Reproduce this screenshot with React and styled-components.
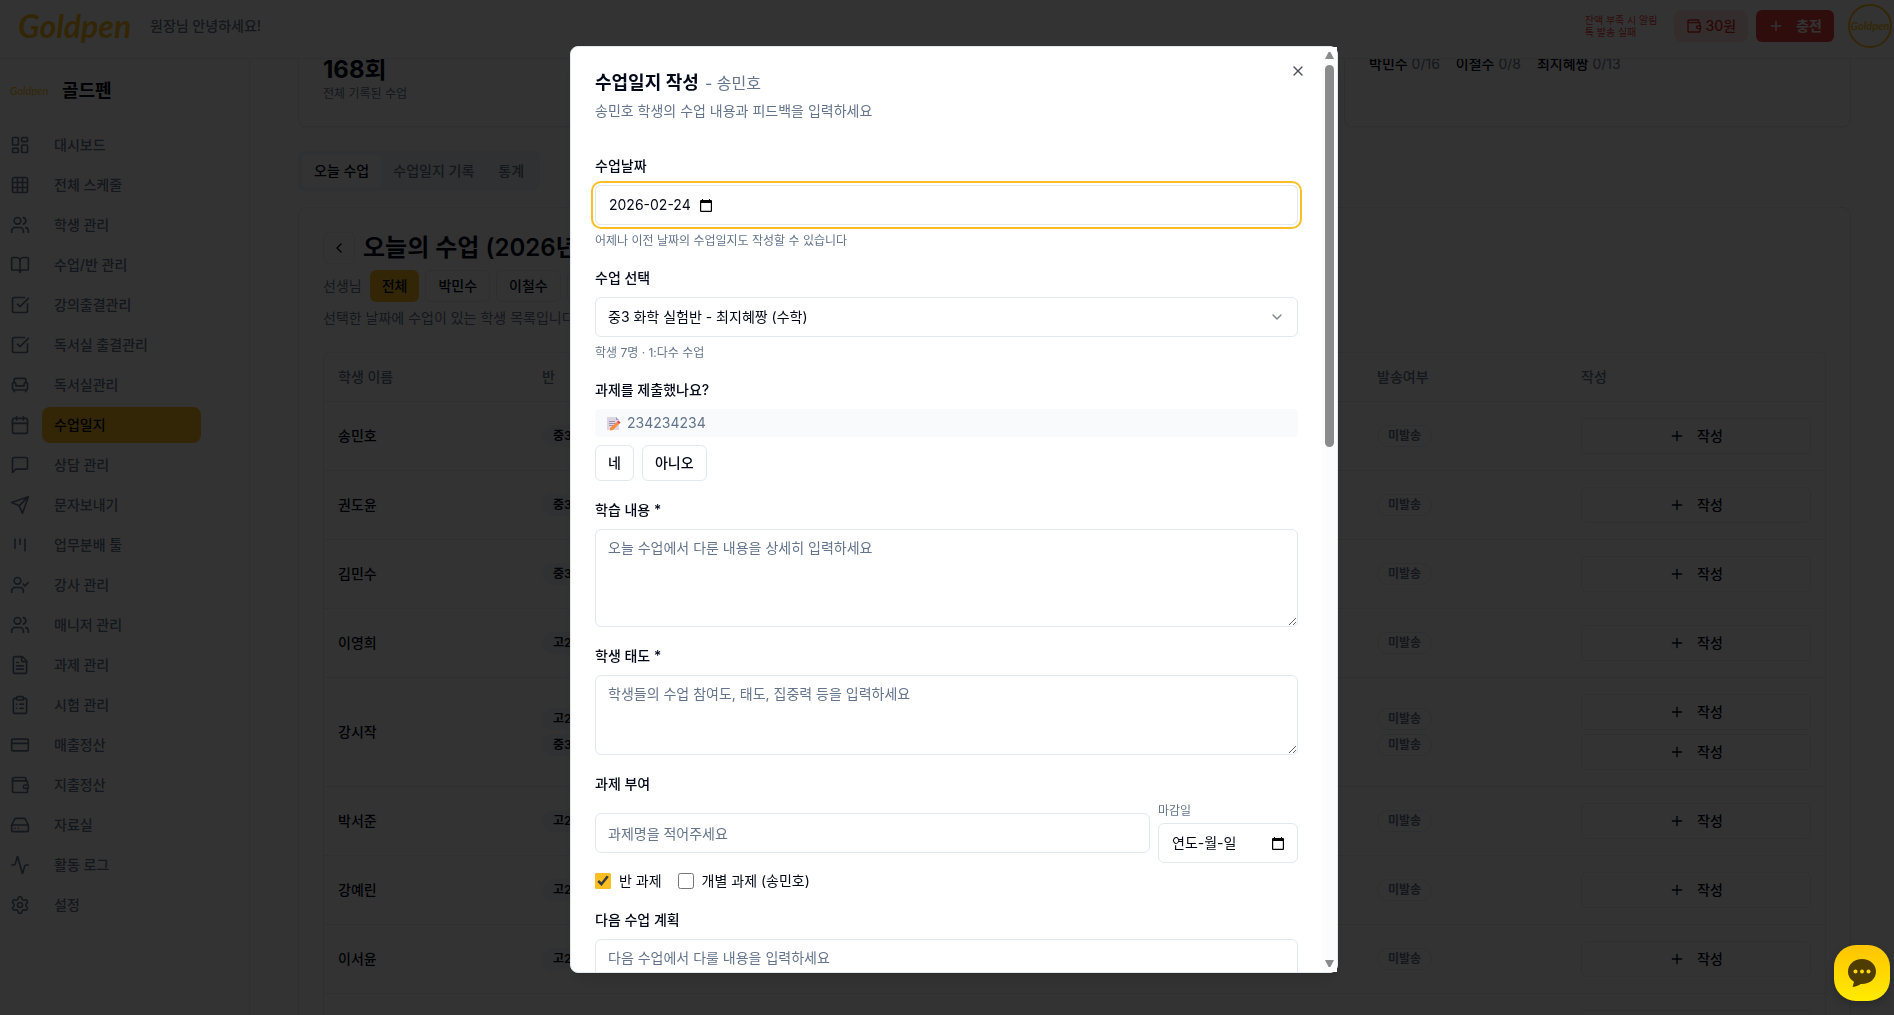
import React, { useState } from 'react'
import styled, { createGlobalStyle } from 'styled-components'
import {
    Activity, Armchair, BookOpen, Calendar, ChevronDown, ChevronLeft, ClipboardList, CreditCard,
    FileText, Grid3x3, HardDrive, LayoutDashboard, Plus, Settings, SquareCheckBig, UserCheck,
    Users, Wallet, X,
} from 'lucide-react'

const line = {
    viewBox: '0 0 24 24', fill: 'none', stroke: 'currentColor',
    strokeWidth: 2, strokeLinecap: 'round', strokeLinejoin: 'round',
}

const ChatIcon = ({ size }) => (
    <svg {...line} width={size} height={size}>
        <path d="M21 15a2 2 0 0 1-2 2H7l-4 4V5a2 2 0 0 1 2-2h14a2 2 0 0 1 2 2z" />
    </svg>
)

const SendIcon = ({ size }) => (
    <svg {...line} width={size} height={size}>
        <path d="m22 2-7 20-4-9-9-4Z" />
        <path d="M22 2 11 13" />
    </svg>
)

const KanbanIcon = ({ size }) => (
    <svg {...line} width={size} height={size}>
        <path d="M6 5v11" />
        <path d="M12 5v6" />
        <path d="M18 5v14" />
    </svg>
)

const DateIcon = () => (
    <svg width="12" height="13" viewBox="0 0 12 13">
        <path fill="#000" fillRule="evenodd" d="M1 1h1V0h1v1h6V0h1v1h1a1 1 0 0 1 1 1v10a1 1 0 0 1-1 1H1a1 1 0 0 1-1-1V2a1 1 0 0 1 1-1zM1.200 4v7.800h9.600V4z" />
    </svg>
)

const MemoIcon = () => (
    <svg width="14" height="15" viewBox="0 0 14 15">
        <path fill="#dcd5e4" d="M0 1h9l3 3v10H0z" />
        <path fill="#a79bb5" d="M9 1l3 3H9z" />
        <path stroke="#9c93a8" d="M2 5.500h6M2 7.500h7M2 9.500h5" />
        <path fill="#ff8b3d" d="M3 12l7-6 2 2-6 6-3 .5z" />
        <path fill="#e8433f" d="M10 6l1.500-1.500 2 2L12 8z" />
    </svg>
)

const BubbleIcon = () => (
    <svg width="28" height="28" viewBox="0 0 28 28">
        <path fill="#4f3d00" d="M14 0C6 0 0 5.500 0 12.500c0 4.500 2.300 8 6 10.200L4.600 28c4-.5 6.400-1.800 8-3 9 .5 15.400-5 15.400-12.500C28 5.500 22 0 14 0z" />
        <circle cx="7.500" cy="12.500" r="2" fill="#ffd800" />
        <circle cx="14" cy="12.500" r="2" fill="#ffd800" />
        <circle cx="20.500" cy="12.500" r="2" fill="#ffd800" />
    </svg>
)

const MENU = [
    ['대시보드', LayoutDashboard],
    ['전체 스케줄', Grid3x3],
    ['학생 관리', Users],
    ['수업/반 관리', BookOpen],
    ['강의출결관리', SquareCheckBig],
    ['독서실 출결관리', SquareCheckBig],
    ['독서실관리', Armchair],
    ['수업일지', Calendar],
    ['상담 관리', ChatIcon],
    ['문자보내기', SendIcon],
    ['업무분배 툴', KanbanIcon],
    ['강사 관리', UserCheck],
    ['매니저 관리', Users],
    ['과제 관리', FileText],
    ['시험 관리', ClipboardList],
    ['매출정산', CreditCard],
    ['지출정산', Wallet],
    ['자료실', HardDrive],
    ['활동 로그', Activity],
    ['설정', Settings],
]

const STUDENTS = [
    ['송민호', ['중3']],
    ['권도윤', ['중3']],
    ['김민수', ['중3']],
    ['이영희', ['고2']],
    ['강시작', ['고2', '중3']],
    ['박서준', ['고2']],
    ['강예린', ['고2']],
    ['이서윤', ['고2']],
    ['최하준', ['고2']],
]

const TEACHERS = [['박민수', '0/16'], ['이철수', '0/8'], ['최지혜짱', '0/13']]

function App() {
    const [scope, setScope] = useState('class')

    return (
        <Shell>
            <GlobalStyle />
            <Header>
                <Logo>Goldpen</Logo>
                <Greeting>원장님 안녕하세요!</Greeting>
                <Notice>잔액 부족 시 알림<br />톡 발송 실패</Notice>
                <Balance><Wallet size={16} />30원</Balance>
                <ChargeButton><Plus size={16} />충전</ChargeButton>
                <Avatar>Goldpen</Avatar>
            </Header>

            <Body>
                <Sidebar>
                    <Brand><SmallLogo>Goldpen</SmallLogo>골드펜</Brand>
                    <Menu>
                        {MENU.map(([name, Icon]) => (
                            <MenuLink key={name} href="#">
                                <Icon size={20} />
                                <MenuText $active={name === '수업일지'}>{name}</MenuText>
                            </MenuLink>
                        ))}
                    </Menu>
                </Sidebar>

                <Main>
                    <Stats>
                        <StatCard>
                            <StatTitle />
                            <StatValue>168회</StatValue>
                            <StatNote>전체 기록된 수업</StatNote>
                        </StatCard>
                        <StatCard />
                        <StatCard>
                            <StatTitle />
                            <Counts>
                                {TEACHERS.map(([name, count]) => (
                                    <span key={name}><b>{name}</b> {count}</span>
                                ))}
                            </Counts>
                        </StatCard>
                    </Stats>

                    <Tabs>
                        <Tab $active>오늘 수업</Tab>
                        <Tab>수업일지 기록</Tab>
                        <Tab>통계</Tab>
                    </Tabs>

                    <Card>
                        <CardHead>
                            <TitleRow>
                                <IconButton aria-label="이전 날짜"><ChevronLeft size={16} /></IconButton>
                                <CardTitle>오늘의 수업 (2026년 2월 24일)</CardTitle>
                            </TitleRow>
                            <FilterRow>
                                <span>선생님</span>
                                <Filters>
                                    <Filter $active>전체</Filter>
                                    <Filter>박민수</Filter>
                                    <Filter>이철수</Filter>
                                    <Filter>최지혜짱</Filter>
                                </Filters>
                            </FilterRow>
                            <p>선택한 날짜에 수업이 있는 학생 목록입니다</p>
                        </CardHead>

                        <TableBox>
                            <Table>
                                <thead>
                                    <tr>
                                        <Th $w="204px">학생 이름</Th>
                                        <Th>반</Th>
                                        <Th $w="204px">발송여부</Th>
                                        <Th $w="258px">작성</Th>
                                    </tr>
                                </thead>
                                <tbody>
                                    {STUDENTS.map(([name, grades]) => (
                                        <tr key={name}>
                                            <Td>{name}</Td>
                                            <Td>
                                                <Stack>{grades.map(g => <Badge key={g} $filled>{g}</Badge>)}</Stack>
                                            </Td>
                                            <Td>
                                                <Stack>{grades.map(g => <Badge key={g}>미발송</Badge>)}</Stack>
                                            </Td>
                                            <Td>
                                                <Stack>
                                                    {grades.map(g => (
                                                        <WriteButton key={g}><Plus size={16} />작성</WriteButton>
                                                    ))}
                                                </Stack>
                                            </Td>
                                        </tr>
                                    ))}
                                </tbody>
                            </Table>
                        </TableBox>
                    </Card>
                </Main>
            </Body>

            <Overlay>
                <Dialog role="dialog" aria-labelledby="dialog-title">
                    <DialogBody>
                        <Close aria-label="닫기"><X size={16} /></Close>
                        <DialogHead>
                            <DialogTitle id="dialog-title">수업일지 작성<small>- 송민호</small></DialogTitle>
                            <p>송민호 학생의 수업 내용과 피드백을 입력하세요</p>
                        </DialogHead>

                        <Form>
                            <Field>
                                <Label htmlFor="date">수업날짜</Label>
                                <DateBox $focus>
                                    <DateInput id="date" $w="91px" defaultValue="2026-02-24" />
                                    <DateIcon />
                                </DateBox>
                                <Help>어제나 이전 날짜의 수업일지도 작성할 수 있습니다</Help>
                            </Field>

                            <Field>
                                <Label htmlFor="lesson">수업 선택</Label>
                                <SelectBox>
                                    <Select id="lesson">
                                        <option>중3 화학 실험반 - 최지혜짱 (수학)</option>
                                    </Select>
                                    <ChevronDown size={16} />
                                </SelectBox>
                                <Help>학생 7명 · 1:다수 수업</Help>
                            </Field>

                            <Field>
                                <Label as="span">과제를 제출했나요?</Label>
                                <Homework><MemoIcon />234234234</Homework>
                                <Answers>
                                    <AnswerButton>네</AnswerButton>
                                    <AnswerButton>아니오</AnswerButton>
                                </Answers>
                            </Field>

                            <Field>
                                <Label htmlFor="content">학습 내용 *</Label>
                                <TextArea id="content" $h="98px" placeholder="오늘 수업에서 다룬 내용을 상세히 입력하세요" />
                            </Field>

                            <Field>
                                <Label htmlFor="attitude">학생 태도 *</Label>
                                <TextArea id="attitude" $h="80px" placeholder="학생들의 수업 참여도, 태도, 집중력 등을 입력하세요" />
                            </Field>

                            <Field>
                                <Label htmlFor="homework">과제 부여</Label>
                                <HomeworkRow>
                                    <Input id="homework" placeholder="과제명을 적어주세요" />
                                    <Due>
                                        <DueLabel htmlFor="due">마감일</DueLabel>
                                        <DateBox>
                                            <DateInput id="due" defaultValue="연도-월-일" />
                                            <DateIcon />
                                        </DateBox>
                                    </Due>
                                </HomeworkRow>
                                <Checks>
                                    <Check>
                                        <input type="checkbox" checked={scope === 'class'} onChange={() => setScope('class')} />
                                        반 과제
                                    </Check>
                                    <Check>
                                        <input type="checkbox" checked={scope === 'student'} onChange={() => setScope('student')} />
                                        개별 과제 (송민호)
                                    </Check>
                                </Checks>
                            </Field>

                            <Field>
                                <Label htmlFor="plan">다음 수업 계획</Label>
                                <TextArea id="plan" $h="80px" placeholder="다음 수업에서 다룰 내용을 입력하세요" />
                            </Field>
                        </Form>
                    </DialogBody>
                    <Scrollbar aria-hidden="true">
                        <Arrow />
                        <Track><Thumb /></Track>
                        <Arrow $down />
                    </Scrollbar>
                </Dialog>
            </Overlay>

            <ChatButton aria-label="채팅 상담"><BubbleIcon /></ChatButton>
        </Shell>
    )
}

export default App

const GlobalStyle = createGlobalStyle`
*{box-sizing:border-box;}
body{
    margin:0;
    background:#fff;
    color:#020817;
    font-family:Inter, "Noto Sans CJK KR", sans-serif;
    font-size:14px;
    line-height:20px;
}
button,input,select,textarea{
    font:inherit;
    color:inherit;
}
button{
    cursor:pointer;
    background:#fff;
    border:0;
    padding:0;
}
p,h2,h3{margin:0;}
svg{flex:none;}
`

const Shell = styled.div`
display:flex;
flex-direction:column;
height:100vh;
overflow:hidden;`

const Header = styled.header`
position:relative;
z-index:1;
flex:none;
display:flex;
align-items:center;
height:59px;
padding:0 2px 7px 18px;
background:#fff;
border-bottom:1px solid #e2e8f0;`

const Logo = styled.div`
width:116px;
margin-right:16px;
font-family:Lato, sans-serif;
font-size:32px;
line-height:40px;
font-weight:700;
font-style:italic;
color:#fbbf24;
`

const SmallLogo = styled(Logo)`
width:40px;
margin-right:12px;
font-size:11px;
font-weight:400;
line-height:16px;`

const Greeting = styled.span`
flex:1;
color:#64748b;
font-weight:500;`

const Notice = styled.span`
margin-right:16px;
font-size:10px;
line-height:12px;
color:#ef4444;`

const Balance = styled.div`
display:flex;
align-items:center;
gap:4px;
height:32px;
margin-right:8px;
padding:0 12px;
border-radius:8px;
background:#fee2e2;
color:#dc2626;
font-weight:500;`

const ChargeButton = styled.button`
display:flex;
align-items:center;
gap:12px;
height:32px;
margin-right:14px;
padding:0 12px;
border-radius:6px;
background:#ef4444;
color:#fff;
font-weight:700;`

const Avatar = styled.div`
display:flex;
align-items:center;
justify-content:center;
width:44px;
height:44px;
border:2px solid #fbbf24;
border-radius:50%;
overflow:hidden;
font-family:Lato, sans-serif;
font-size:11px;
font-weight:700;
font-style:italic;
color:#fbbf24;`

const Body = styled.div`
flex:1;
min-height:0;
display:flex;`

const Sidebar = styled.aside`
flex:none;
width:250px;
padding:16px 48px 0 10px;
border-right:1px solid #e2e8f0;`

const Brand = styled.div`
display:flex;
align-items:center;
height:32px;
margin-bottom:20px;
font-size:18px;
font-weight:700;`

const Menu = styled.nav`
display:flex;
flex-direction:column;
gap:4px;`

const MenuLink = styled.a`
display:flex;
align-items:center;
gap:12px;
color:#64748b;
text-decoration:none;
`

const MenuText = styled.span`
flex:1;
padding:8px 12px;
border-radius:8px;
font-weight:500;
background:${props => props.$active ? '#fbbf24' : 'transparent'};
color:${props => props.$active ? '#020817' : '#64748b'};
`

const Main = styled.main`
flex:1;
min-width:0;
overflow:hidden;
padding:0 43px 0 48px;`

const Stats = styled.div`
display:grid;
grid-template-columns:repeat(3, 1fr);
gap:16px;
margin-top:-58px;`

const Card = styled.section`
padding:24px;
border:1px solid #e2e8f0;
border-radius:8px;
background:#fff;
box-shadow:0 1px 2px rgba(0,0,0,0.05);
`

const StatCard = styled(Card)`
`

const StatTitle = styled.div`
height:28px;`

const StatValue = styled.div`
font-size:24px;
line-height:32px;
font-weight:700;`

const StatNote = styled.div`
font-size:12px;
line-height:16px;
color:#64748b;`

const Counts = styled.div`
display:flex;
gap:16px;
color:#64748b;

b{
    font-weight:500;
    color:#020817;
}
`

const Tabs = styled.div`
display:inline-flex;
margin:24px 0 16px;
padding:4px;
border-radius:6px;
background:#f1f5f9;
vertical-align:top;`

const Tab = styled.button`
height:32px;
padding:0 12px;
border-radius:4px;
font-weight:500;
background:${props => props.$active ? '#fff' : 'transparent'};
color:${props => props.$active ? '#020817' : '#64748b'};
`

const CardHead = styled.div`
display:flex;
flex-direction:column;
gap:6px;
margin-bottom:24px;
color:#64748b;`

const TitleRow = styled.div`
display:flex;
align-items:center;
gap:8px;
color:#020817;`

const IconButton = styled.button`
display:flex;
align-items:center;
justify-content:center;
width:32px;
height:32px;
border:1px solid #e2e8f0;
border-radius:6px;`

const CardTitle = styled.h2`
font-size:24px;
line-height:32px;
font-weight:600;`

const FilterRow = styled.div`
display:flex;
align-items:center;
gap:8px;`

const Filters = styled.div`
display:flex;
gap:6px;`

const Filter = styled.button`
height:32px;
padding:0 12px;
border:${props => props.$active ? '0' : '1px solid #e2e8f0'};
border-radius:6px;
background:${props => props.$active ? '#fbbf24' : '#fff'};
color:#020817;
font-weight:500;`

const TableBox = styled.div`
border:1px solid #e2e8f0;
border-radius:6px;`

const Table = styled.table`
width:100%;
table-layout:fixed;
border-collapse:collapse;`

const Th = styled.th`
width:${props => props.$w || 'auto'};
height:48px;
padding:0 14px;
border-bottom:1px solid #e2e8f0;
text-align:left;
font-weight:500;
color:#64748b;`

const Td = styled.td`
padding:16px 14px;
border-bottom:1px solid #e2e8f0;
font-weight:500;`

const Stack = styled.div`
display:flex;
flex-direction:column;
align-items:flex-start;
gap:4px;`

const Badge = styled.span`
padding:2px 10px;
border:1px solid ${props => props.$filled ? 'transparent' : '#e2e8f0'};
border-radius:11px;
background:${props => props.$filled ? '#f1f5f9' : 'transparent'};
color:${props => props.$filled ? '#020817' : '#64748b'};
font-size:12px;
line-height:16px;
font-weight:600;`

const WriteButton = styled.button`
display:flex;
align-items:center;
justify-content:center;
gap:12px;
width:100%;
height:36px;
border:1px solid #e2e8f0;
border-radius:6px;
font-weight:500;`

const Overlay = styled.div`
position:fixed;
inset:0;
z-index:10;
display:flex;
justify-content:center;
padding:46px 0 42px 14px;
background:rgba(0,0,0,0.8);`

const Dialog = styled.div`
display:flex;
width:100%;
max-width:768px;
border:1px solid #e2e8f0;
border-radius:8px;
background:#fff;
box-shadow:0 10px 15px -3px rgba(0,0,0,0.1), 0 4px 6px -4px rgba(0,0,0,0.1);`

const DialogBody = styled.div`
position:relative;
flex:1;
min-width:0;
overflow:hidden;
padding:24px;
border-radius:7px 0 0 7px;`

const Close = styled.button`
position:absolute;
top:16px;
right:16px;
display:flex;
opacity:0.7;`

const DialogHead = styled.div`
display:flex;
flex-direction:column;
gap:6px;
margin-bottom:35px;
color:#64748b;`

const DialogTitle = styled.h2`
font-size:18px;
line-height:24px;
font-weight:600;
color:#020817;

small{
    margin-left:6px;
    font-size:16px;
    font-weight:400;
    color:#64748b;
}
`

const Form = styled.form`
display:flex;
flex-direction:column;
gap:19px;`

const Field = styled.div`
display:flex;
flex-direction:column;
gap:8px;`

const Label = styled.label`
margin-bottom:1px;
font-weight:500;`

const Help = styled.p`
font-size:12px;
line-height:16px;
color:#64748b;`

const Input = styled.input`
flex:1;
min-width:0;
height:40px;
padding:0 12px;
border:1px solid #e2e8f0;
border-radius:6px;
background:#fff;

&::placeholder{
    color:#64748b;
}
`

const DateBox = styled.div`
display:flex;
align-items:center;
height:40px;
padding:0 13px;
border:1px solid #e2e8f0;
border-radius:6px;
box-shadow:${props => props.$focus ? '0 0 0 2px #fff, 0 0 0 4px #fbbf24' : 'none'};`

const DateInput = styled.input`
flex:${props => props.$w ? 'none' : '1'};
width:${props => props.$w || 'auto'};
min-width:0;
padding:0;
border:0;
outline:0;
background:transparent;`

const SelectBox = styled.div`
display:grid;
align-items:center;

svg{
    grid-area:1 / 1;
    justify-self:end;
    margin-right:13px;
    opacity:0.5;
    pointer-events:none;
}
`

const Select = styled.select`
grid-area:1 / 1;
appearance:none;
height:40px;
padding:0 12px;
border:1px solid #e2e8f0;
border-radius:6px;
background:#fff;`

const Homework = styled.div`
display:flex;
align-items:center;
gap:6px;
padding:4px 12px;
border-radius:4px;
background:#f8fafc;
color:#64748b;`

const Answers = styled.div`
display:flex;
gap:8px;`

const AnswerButton = styled.button.attrs({ type: 'button' })`
height:36px;
padding:0 12px;
border:1px solid #e2e8f0;
border-radius:6px;
font-weight:500;`

const TextArea = styled.textarea`
display:block;
height:${props => props.$h};
padding:8px 12px;
border:1px solid #e2e8f0;
border-radius:6px;
resize:vertical;

&::placeholder{
    color:#64748b;
}
`

const HomeworkRow = styled.div`
display:flex;
align-items:center;
gap:8px;`

const Due = styled.div`
display:flex;
flex-direction:column;
gap:4px;
width:140px;`

const DueLabel = styled(Label)`
margin-bottom:0;
font-size:12px;
line-height:16px;
font-weight:400;
color:#64748b;`

const Checks = styled.div`
display:flex;
gap:16px;`

const Check = styled.label`
display:flex;
align-items:center;
gap:8px;

input{
    width:16px;
    height:16px;
    margin:0;
    accent-color:#fbbf24;
}
`

const Scrollbar = styled.div`
flex:none;
display:flex;
flex-direction:column;
align-items:center;
gap:6px;
width:15px;
padding:5px 0;
background:#fcfcfc;`

const Arrow = styled.span`
width:9px;
height:7px;
background:#8b8b8b;
clip-path:${props => props.$down ? 'polygon(0 0, 100% 0, 60% 100%, 40% 100%)' : 'polygon(40% 0, 60% 0, 100% 100%, 0 100%)'};`

const Track = styled.div`
flex:1;
width:9px;`

const Thumb = styled.div`
height:43%;
border-radius:5px;
background:#8b8b8b;`

const ChatButton = styled.button`
position:fixed;
right:4px;
bottom:14px;
z-index:20;
display:flex;
align-items:center;
justify-content:center;
width:56px;
height:56px;
border-radius:22px;
background:linear-gradient(#ffc400, #ffeb00);
box-shadow:0 4px 8px rgba(0,0,0,0.2);`
